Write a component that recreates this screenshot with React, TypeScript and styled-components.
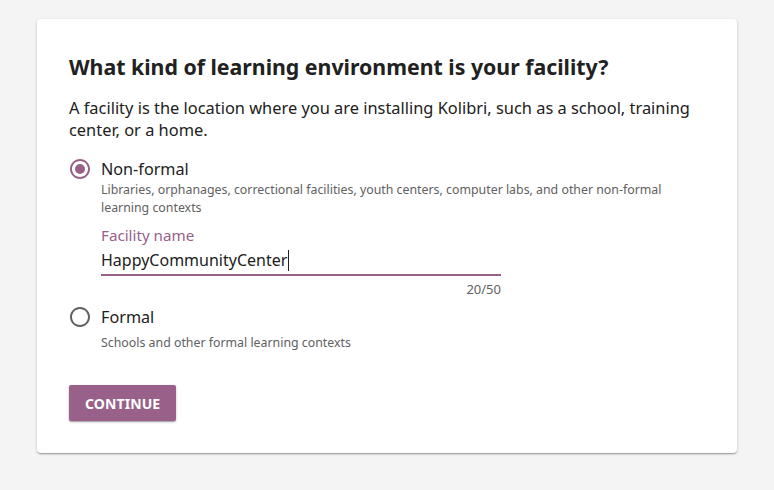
import styled, { createGlobalStyle } from 'styled-components';

const GlobalStyle = createGlobalStyle`
  html, body {
    margin: 0;
    padding: 0;
    background: #f4f4f4;
    font-family: 'Noto Sans', 'Open Sans', sans-serif;
    color: #212121;
  }
`;

const PageWrapper = styled.div`
  padding: 19px 37px 38px 37px;
`;

const Card = styled.div`
  width: 700px;
  box-sizing: border-box;
  background: #ffffff;
  border-radius: 4px;
  box-shadow: 0 1px 3px rgba(0, 0, 0, 0.2), 0 1px 1px rgba(0, 0, 0, 0.14),
    0 2px 1px -1px rgba(0, 0, 0, 0.12);
  padding: 33px 32px 32px 32px;
`;

const Title = styled.h1`
  margin: 0;
  font-size: 21.3px;
  line-height: 30px;
  font-weight: 700;
`;

const Intro = styled.p`
  margin: 15px 0 0 0;
  font-size: 16.4px;
  line-height: 22px;
`;

const OptionList = styled.div`
  margin-top: 16px;
  display: flex;
  flex-direction: column;
`;

const Option = styled.div<{ $gap?: number }>`
  display: flex;
  flex-direction: column;
  margin-bottom: ${(p) => p.$gap ?? 0}px;
`;

const RadioRow = styled.label`
  display: flex;
  align-items: center;
  gap: 9px;
  margin-left: -1px;
  font-size: 16.2px;
  line-height: 24px;
  cursor: pointer;
`;

const RadioIcon = styled.svg<{ $checked: boolean }>`
  width: 24px;
  height: 24px;
  flex-shrink: 0;
  fill: ${(p) => (p.$checked ? '#996189' : '#616161')};
`;

const OptionBody = styled.div<{ $top?: number }>`
  padding-left: 32px;
  margin-top: ${(p) => p.$top ?? 0}px;
`;

const Description = styled.div`
  font-size: 12.35px;
  line-height: 18px;
  color: #616161;
  max-width: 580px;
`;

const Field = styled.div`
  width: 400px;
  margin-top: 8px;
`;

const FieldLabel = styled.div`
  font-size: 15.2px;
  line-height: 20px;
  margin-bottom: 3px;
  color: #996189;
`;

const FieldInput = styled.div`
  font-size: 16px;
  line-height: 24px;
  padding-bottom: 2px;
  border-bottom: 2px solid #996189;
  display: flex;
  align-items: center;
`;

const Caret = styled.span`
  display: inline-block;
  width: 1px;
  height: 21px;
  background: #212121;
  margin-left: 1px;
`;

const Counter = styled.div`
  text-align: right;
  font-size: 13px;
  line-height: 18px;
  color: #616161;
  margin-top: 4px;
`;

const ContinueButton = styled.button`
  margin-top: 33px;
  height: 36px;
  padding: 0 16px;
  min-width: 107px;
  border: none;
  border-radius: 2px;
  background: #996189;
  color: #ffffff;
  font-family: 'Noto Sans', 'Open Sans', sans-serif;
  font-size: 14px;
  font-weight: 700;
  letter-spacing: 0.1px;
  box-shadow: 0 1px 3px rgba(0, 0, 0, 0.2), 0 1px 1px rgba(0, 0, 0, 0.14),
    0 2px 1px -1px rgba(0, 0, 0, 0.12);
  cursor: pointer;
`;

const Radio = ({ checked }: { checked: boolean }) => (
  <RadioIcon $checked={checked} viewBox="0 0 24 24">
    {checked && <circle cx="12" cy="12" r="5" />}
    <path d="M12 2C6.48 2 2 6.48 2 12s4.48 10 10 10 10-4.48 10-10S17.52 2 12 2zm0 18c-4.42 0-8-3.58-8-8s3.58-8 8-8 8 3.58 8 8-3.58 8-8 8z" />
  </RadioIcon>
);

const App = () => {
  const facilityName = 'HappyCommunityCenter';

  return (
    <>
      <GlobalStyle />
      <PageWrapper>
        <Card>
          <Title>What kind of learning environment is your facility?</Title>
          <Intro>
            A facility is the location where you are installing Kolibri, such as a school, training
            center, or a home.
          </Intro>

          <OptionList>
            <Option $gap={7}>
              <RadioRow>
                <Radio checked />
                Non-formal
              </RadioRow>
              <OptionBody>
                <Description>
                  Libraries, orphanages, correctional facilities, youth centers, computer labs, and
                  other non-formal learning contexts
                </Description>
                <Field>
                  <FieldLabel>Facility name</FieldLabel>
                  <FieldInput>
                    {facilityName}
                    <Caret />
                  </FieldInput>
                  <Counter>{facilityName.length}/50</Counter>
                </Field>
              </OptionBody>
            </Option>

            <Option>
              <RadioRow>
                <Radio checked={false} />
                Formal
              </RadioRow>
              <OptionBody $top={5}>
                <Description>Schools and other formal learning contexts</Description>
              </OptionBody>
            </Option>
          </OptionList>

          <ContinueButton>CONTINUE</ContinueButton>
        </Card>
      </PageWrapper>
    </>
  );
};

export default App;
